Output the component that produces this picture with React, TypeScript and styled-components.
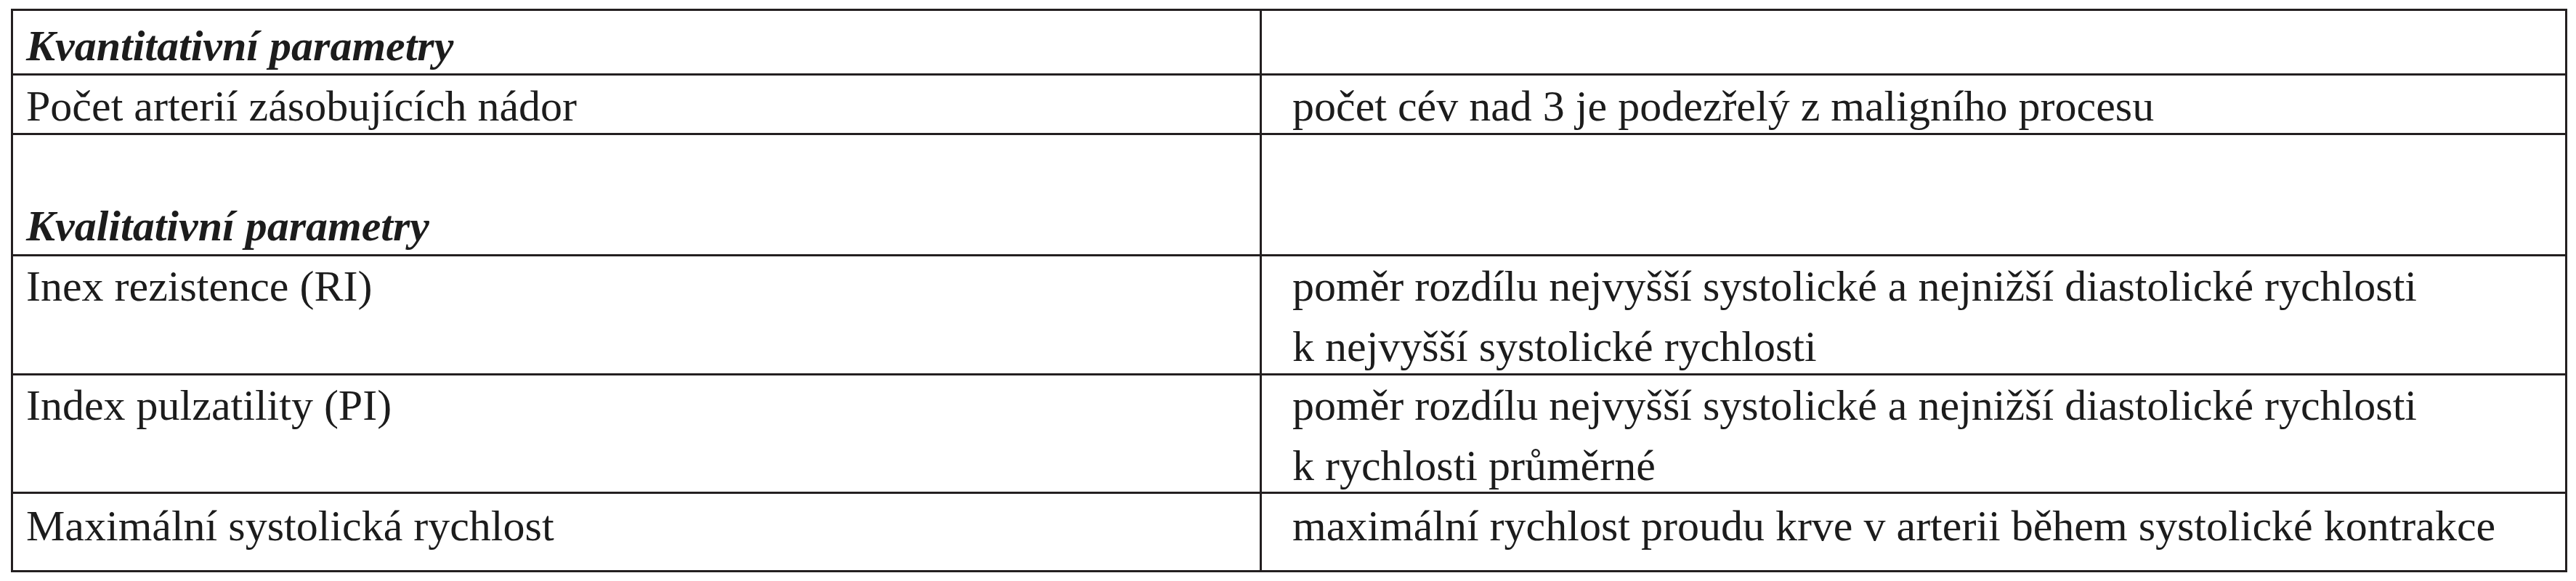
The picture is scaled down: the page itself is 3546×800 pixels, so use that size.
import React from 'react';
import styled, { createGlobalStyle } from 'styled-components';

const GlobalStyle = createGlobalStyle`
  html, body {
    margin: 0;
    padding: 0;
    background: #ffffff;
    overflow: hidden;
  }
`;

type Row = {
  height: number;
  top: number;
  left: string[];
  right: string[];
  heading?: boolean;
};

const rows: Row[] = [
  { height: 86, top: 7, left: ['Kvantitativní parametry'], right: [], heading: true },
  {
    height: 79,
    top: 1,
    left: ['Počet arterií zásobujících nádor'],
    right: ['počet cév nad 3 je podezřelý z maligního procesu'],
  },
  { height: 164, top: 84, left: ['Kvalitativní parametry'], right: [], heading: true },
  {
    height: 161,
    top: 0,
    left: ['Inex rezistence (RI)'],
    right: [
      'poměr rozdílu nejvyšší systolické a nejnižší diastolické rychlosti',
      'k nejvyšší systolické rychlosti',
    ],
  },
  {
    height: 160,
    top: 0,
    left: ['Index pulzatility (PI)'],
    right: [
      'poměr rozdílu nejvyšší systolické a nejnižší diastolické rychlosti',
      'k rychlosti průměrné',
    ],
  },
  {
    height: 105,
    top: 3,
    left: ['Maximální systolická rychlost'],
    right: ['maximální rychlost proudu krve v arterii během systolické kontrakce'],
  },
];

export default function App() {
  return (
    <>
      <GlobalStyle />
      <Page>
        <Table $rows={rows.map((r) => `${r.height}px`).join(' ')}>
          {rows.map((row, i) => (
            <React.Fragment key={i}>
              <Cell $top={row.top} $left={18}>
                {row.left.map((line, j) =>
                  row.heading ? <Heading key={j}>{line}</Heading> : <Line key={j}>{line}</Line>
                )}
              </Cell>
              <Cell $top={row.top} $left={42}>
                {row.right.map((line, j) => (
                  <Line key={j}>{line}</Line>
                ))}
              </Cell>
            </React.Fragment>
          ))}
        </Table>
      </Page>
    </>
  );
}

const Page = styled.div`
  padding: 12px 0 0 15px;
  width: 3546px;
  height: 800px;
  box-sizing: border-box;
`;

const Table = styled.div<{ $rows: string }>`
  display: grid;
  grid-template-columns: 1716px 1794px;
  grid-template-rows: ${(p) => p.$rows};
  gap: 3px;
  padding: 3px;
  width: fit-content;
  background: #231f20;
`;

const Cell = styled.div<{ $top: number; $left: number }>`
  background: #ffffff;
  padding: ${(p) => p.$top}px 8px 0 ${(p) => p.$left}px;
  overflow: hidden;
  display: flex;
  flex-direction: column;
`;

const Line = styled.div`
  font-family: 'Liberation Serif', 'Times New Roman', serif;
  font-size: 60px;
  line-height: 83px;
  color: #1c1c1c;
  white-space: nowrap;
`;

const Heading = styled(Line)`
  font-weight: bold;
  font-style: italic;
`;
